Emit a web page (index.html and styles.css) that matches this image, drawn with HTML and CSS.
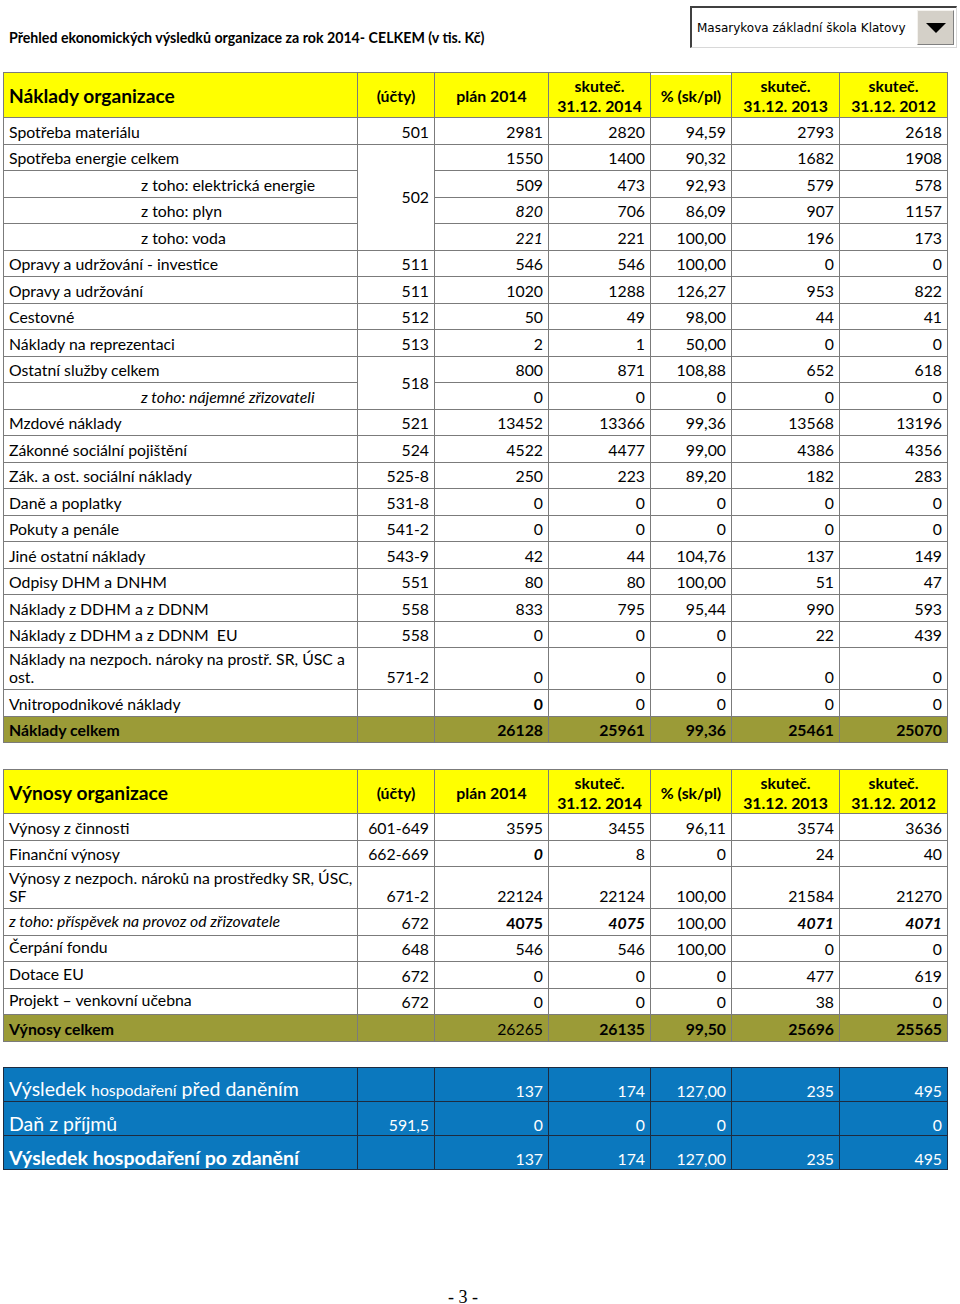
FILE: index.html
```html
<!DOCTYPE html>
<html lang="cs">
<head>
<meta charset="utf-8">
<title>Přehled ekonomických výsledků</title>
<link rel="stylesheet" href="styles.css">
</head>
<body>
<div class="page">
  <header class="top">
    <h1 class="title">Přehled ekonomických výsledků organizace za rok 2014- CELKEM (v tis. Kč)</h1>
    <div class="combo">
      <span class="combo-text">Masarykova základní škola Klatovy</span>
      <span class="combo-btn"><svg width="20" height="10" viewBox="0 0 20 10"><polygon points="0,0 20,0 10,10" fill="#000"/></svg></span>
    </div>
  </header>

  <table class="grid costs">
    <colgroup>
      <col class="c1"><col class="c2"><col class="c3"><col class="c4"><col class="c5"><col class="c6"><col class="c7">
    </colgroup>
    <thead>
      <tr class="head">
        <th class="h-name">Náklady organizace</th>
        <th>(účty)</th>
        <th>plán 2014</th>
        <th>skuteč.<br>31.12. 2014</th>
        <th class="pct-h">% (sk/pl)</th>
        <th>skuteč.<br>31.12. 2013</th>
        <th>skuteč.<br>31.12. 2012</th>
      </tr>
    </thead>
    <tbody>
      <tr><td class="n">Spotřeba materiálu</td><td>501</td><td>2981</td><td>2820</td><td>94,59</td><td>2793</td><td>2618</td></tr>
      <tr><td class="n">Spotřeba energie celkem</td><td class="mid" rowspan="4">502</td><td>1550</td><td>1400</td><td>90,32</td><td>1682</td><td>1908</td></tr>
      <tr><td class="n sub">z toho: elektrická energie</td><td>509</td><td>473</td><td>92,93</td><td>579</td><td>578</td></tr>
      <tr><td class="n sub">z toho: plyn</td><td class="i">820</td><td>706</td><td>86,09</td><td>907</td><td>1157</td></tr>
      <tr><td class="n sub">z toho: voda</td><td class="i">221</td><td>221</td><td>100,00</td><td>196</td><td>173</td></tr>
      <tr><td class="n">Opravy a udržování - investice</td><td>511</td><td>546</td><td>546</td><td>100,00</td><td>0</td><td>0</td></tr>
      <tr><td class="n">Opravy a udržování</td><td>511</td><td>1020</td><td>1288</td><td>126,27</td><td>953</td><td>822</td></tr>
      <tr><td class="n">Cestovné</td><td>512</td><td>50</td><td>49</td><td>98,00</td><td>44</td><td>41</td></tr>
      <tr><td class="n">Náklady na reprezentaci</td><td>513</td><td>2</td><td>1</td><td>50,00</td><td>0</td><td>0</td></tr>
      <tr><td class="n">Ostatní služby celkem</td><td class="mid" rowspan="2">518</td><td>800</td><td>871</td><td>108,88</td><td>652</td><td>618</td></tr>
      <tr><td class="n sub i">z toho: nájemné zřizovateli</td><td>0</td><td>0</td><td>0</td><td>0</td><td>0</td></tr>
      <tr><td class="n">Mzdové náklady</td><td>521</td><td>13452</td><td>13366</td><td>99,36</td><td>13568</td><td>13196</td></tr>
      <tr><td class="n">Zákonné sociální pojištění</td><td>524</td><td>4522</td><td>4477</td><td>99,00</td><td>4386</td><td>4356</td></tr>
      <tr><td class="n">Zák. a ost. sociální náklady</td><td>525-8</td><td>250</td><td>223</td><td>89,20</td><td>182</td><td>283</td></tr>
      <tr><td class="n">Daně a poplatky</td><td>531-8</td><td>0</td><td>0</td><td>0</td><td>0</td><td>0</td></tr>
      <tr><td class="n">Pokuty a penále</td><td>541-2</td><td>0</td><td>0</td><td>0</td><td>0</td><td>0</td></tr>
      <tr><td class="n">Jiné ostatní náklady</td><td>543-9</td><td>42</td><td>44</td><td>104,76</td><td>137</td><td>149</td></tr>
      <tr><td class="n">Odpisy DHM a DNHM</td><td>551</td><td>80</td><td>80</td><td>100,00</td><td>51</td><td>47</td></tr>
      <tr><td class="n">Náklady z DDHM a z DDNM</td><td>558</td><td>833</td><td>795</td><td>95,44</td><td>990</td><td>593</td></tr>
      <tr><td class="n">Náklady z DDHM a z DDNM&nbsp; EU</td><td>558</td><td>0</td><td>0</td><td>0</td><td>22</td><td>439</td></tr>
      <tr class="tall"><td class="n">Náklady na nezpoch. nároky na prostř. SR, ÚSC a<br>ost.</td><td>571-2</td><td>0</td><td>0</td><td>0</td><td>0</td><td>0</td></tr>
      <tr><td class="n">Vnitropodnikové náklady</td><td></td><td class="b">0</td><td>0</td><td>0</td><td>0</td><td>0</td></tr>
      <tr class="total"><td class="n">Náklady celkem</td><td></td><td>26128</td><td>25961</td><td>99,36</td><td>25461</td><td>25070</td></tr>
    </tbody>
  </table>

  <table class="grid income">
    <colgroup>
      <col class="c1"><col class="c2"><col class="c3"><col class="c4"><col class="c5"><col class="c6"><col class="c7">
    </colgroup>
    <thead>
      <tr class="head">
        <th class="h-name">Výnosy organizace</th>
        <th>(účty)</th>
        <th>plán 2014</th>
        <th>skuteč.<br>31.12. 2014</th>
        <th>% (sk/pl)</th>
        <th>skuteč.<br>31.12. 2013</th>
        <th>skuteč.<br>31.12. 2012</th>
      </tr>
    </thead>
    <tbody>
      <tr><td class="n">Výnosy z činnosti</td><td>601-649</td><td>3595</td><td>3455</td><td>96,11</td><td>3574</td><td>3636</td></tr>
      <tr><td class="n">Finanční výnosy</td><td>662-669</td><td class="b i">0</td><td>8</td><td>0</td><td>24</td><td>40</td></tr>
      <tr class="tall"><td class="n">Výnosy z nezpoch. nároků na prostředky SR, ÚSC,<br>SF</td><td>671-2</td><td>22124</td><td>22124</td><td>100,00</td><td>21584</td><td>21270</td></tr>
      <tr><td class="n i up">z toho: příspěvek na provoz od zřizovatele</td><td>672</td><td class="b">4075</td><td class="b i">4075</td><td>100,00</td><td class="b i">4071</td><td class="b i">4071</td></tr>
      <tr><td class="n up">Čerpání fondu</td><td>648</td><td>546</td><td>546</td><td>100,00</td><td>0</td><td>0</td></tr>
      <tr><td class="n up">Dotace EU</td><td>672</td><td>0</td><td>0</td><td>0</td><td>477</td><td>619</td></tr>
      <tr><td class="n up">Projekt – venkovní učebna</td><td>672</td><td>0</td><td>0</td><td>0</td><td>38</td><td>0</td></tr>
      <tr class="total"><td class="n">Výnosy celkem</td><td></td><td class="nb">26265</td><td>26135</td><td>99,50</td><td>25696</td><td>25565</td></tr>
    </tbody>
  </table>

  <table class="grid result">
    <colgroup>
      <col class="c1"><col class="c2"><col class="c3"><col class="c4"><col class="c5"><col class="c6"><col class="c7">
    </colgroup>
    <tbody>
      <tr><td class="n big">Výsledek <span class="small">hospodaření</span> před daněním</td><td></td><td>137</td><td>174</td><td>127,00</td><td>235</td><td>495</td></tr>
      <tr><td class="n big">Daň z příjmů</td><td>591,5</td><td>0</td><td>0</td><td>0</td><td></td><td>0</td></tr>
      <tr><td class="n big b">Výsledek hospodaření po zdanění</td><td></td><td>137</td><td>174</td><td>127,00</td><td>235</td><td>495</td></tr>
    </tbody>
  </table>

  <div class="pageno">- 3 -</div>
</div>
</body>
</html>
```

FILE: styles.css
```css
* { box-sizing: border-box; }

html, body {
  margin: 0;
  padding: 0;
  background: #fff;
}

body {
  font-family: Lato, "Open Sans", "Noto Sans", sans-serif;
  color: #000;
}

.page {
  width: 960px;
  padding: 0 0 0 3px;
}

.top {
  height: 72px;
  display: flex;
  justify-content: space-between;
  align-items: flex-start;
}

.title {
  margin: 29px 0 0 6px;
  font-size: 14.2px;
  font-weight: bold;
  line-height: 18px;
  white-space: nowrap;
}

.combo {
  margin: 6px 3px 0 0;
  width: 267px;
  height: 42px;
  display: flex;
  align-items: stretch;
  border-top: 2px solid #404040;
  border-left: 2px solid #404040;
  border-right: 1px solid #d8d8d8;
  border-bottom: 1px solid #d8d8d8;
  background: #fff;
  padding: 2px 2px 2px 0;
}

.combo-text {
  flex: 1;
  display: flex;
  align-items: center;
  padding-left: 5px;
  font-family: "DejaVu Sans", Verdana, sans-serif;
  font-size: 12px;
  color: #000;
  white-space: nowrap;
}

.combo-btn {
  width: 37px;
  background: #d4d0c8;
  display: flex;
  align-items: center;
  justify-content: center;
  border-top: 1px solid #f4f2ee;
  border-left: 1px solid #f4f2ee;
  border-right: 1px solid #808080;
  border-bottom: 1px solid #808080;
}

.grid {
  border-collapse: collapse;
  table-layout: fixed;
  width: 944px;
  font-size: 15.8px;
}

.c1 { width: 354px; }
.c2 { width: 77px; }
.c3 { width: 114px; }
.c4 { width: 102px; }
.c5 { width: 81px; }
.c6 { width: 108px; }
.c7 { width: 108px; }

.grid td, .grid th {
  border: 1px solid #7b7b7b;
  padding: 0 5px 3px 5px;
  line-height: 18px;
  vertical-align: bottom;
  text-align: right;
  white-space: nowrap;
}

.grid tbody tr { height: 26.5px; }
.grid tbody tr.tall { height: 42px; }

.grid td.n { text-align: left; }
.grid td.sub { padding-left: 137px; }
.grid td.mid { vertical-align: middle; padding-bottom: 0; }
.grid td.up { vertical-align: middle; padding-bottom: 2px; }
.i { font-style: italic; }
.b { font-weight: bold; }

.grid .head th {
  background: #ffff00;
  font-weight: bold;
  text-align: center;
  vertical-align: middle;
  padding: 2px 4px 0 4px;
  line-height: 20px;
}

.costs .head { height: 45px; }
.income .head { height: 44px; }

.grid .head th.h-name {
  text-align: left;
  font-size: 19.2px;
  padding-left: 5px;
}

.grid .head th.pct-h {
  box-shadow: inset 0 2px 0 #fff;
}

.grid tr.total td {
  background: #9b9b37;
  font-weight: bold;
}

.grid tr.total td.nb { font-weight: normal; }

.costs { margin-bottom: 26px; }
.income { margin-bottom: 25px; }

.result tbody tr { height: 34px; }

.result td {
  background: #0b78be;
  color: #fff;
  border-color: #1d2b40;
  padding-bottom: 1px;
}

.result td.big {
  font-size: 19.5px;
  line-height: 22px;
  padding-bottom: 0;
}

.result .small { font-size: 15.8px; }

.pageno {
  margin-top: 117px;
  width: 920px;
  text-align: center;
  font-family: "Liberation Serif", "Times New Roman", serif;
  font-size: 18px;
  line-height: 20px;
}
```
